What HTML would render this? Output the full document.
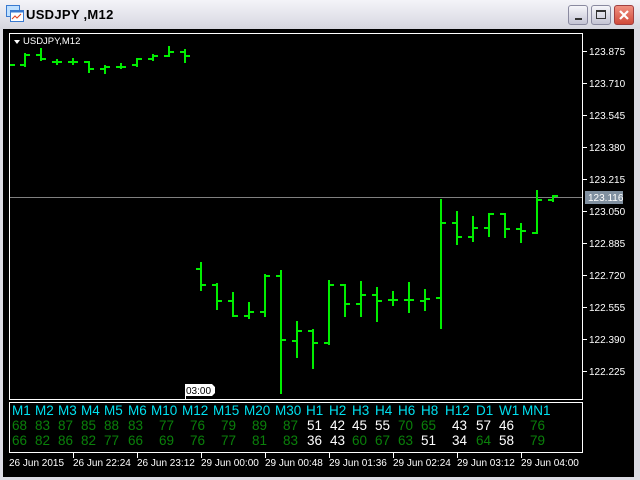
<!DOCTYPE html>
<html><head><meta charset="utf-8"><style>
html,body{margin:0;padding:0;width:640px;height:480px;overflow:hidden;background:#d4d0c8;font-family:"Liberation Sans",sans-serif}
#win{position:absolute;left:0;top:0;width:640px;height:480px;background:#dcdce4;}
#title{position:absolute;left:0;top:0;width:640px;height:29px;background:linear-gradient(#f4f4f8,#e2e2ea 60%,#d6d6de);}
#ttext{position:absolute;left:26px;top:7px;font-size:13px;font-weight:bold;color:#000;letter-spacing:0.3px}
.btn{position:absolute;top:5px;width:20px;height:20px;border-radius:3px;border:1px solid #8a8aa0;background:linear-gradient(#f6f6fa,#c4c4d4);box-sizing:border-box}
#chart{position:absolute;left:3px;top:29px;width:631px;height:448px;background:#000}
svg text{font-family:"Liberation Sans",sans-serif}
</style></head><body>
<div id="win">
<div id="title">
 <svg style="position:absolute;left:6px;top:5px" width="18" height="18" viewBox="0 0 18 18">
  <rect x="0.5" y="0.5" width="13" height="11" fill="#bfe0ff" stroke="#3a7ad0"/>
  <rect x="4.5" y="5.5" width="13" height="11" fill="#fff" stroke="#3a7ad0"/>
  <rect x="4.5" y="5.5" width="13" height="2" fill="#3a7ad0"/>
  <path d="M6 14 L9 11 L11 13 L15 9" stroke="#e04020" fill="none"/>
 </svg>
 <div id="ttext">USDJPY ,M12</div>
 <div class="btn" style="left:568px"><div style="position:absolute;left:6px;top:12px;width:7px;height:2px;background:#333"></div></div>
 <div class="btn" style="left:591px"><div style="position:absolute;left:4px;top:4px;width:10px;height:9px;border:1px solid #333;border-top-width:2px;box-sizing:border-box"></div></div>
 <div class="btn" style="left:614px;background:linear-gradient(#f09080,#d04a3a);border-color:#a04040"><svg width="18" height="18" style="position:absolute;left:0;top:0"><path d="M5 5 L13 13 M13 5 L5 13" stroke="#fff" stroke-width="2.2"/></svg></div>
</div>
<div id="chart"></div>
<svg width="640" height="480" style="position:absolute;left:0;top:0">
 <rect x="9.5" y="33.5" width="573" height="366" fill="none" stroke="#fff"/>
 <rect x="9.5" y="402.5" width="573" height="50" fill="none" stroke="#fff"/>
 <line x1="10" y1="197.5" x2="582" y2="197.5" stroke="#808080"/>
 <path d="M14 40 L20 40 L17 44 Z" fill="#fff"/>
 <text x="23" y="44" font-size="9.5" fill="#fff">USDJPY,M12</text>
 <g stroke="#fff">
  <path d="M583 51.5H587M583 83.5H587M583 115.5H587M583 147.5H587M583 179.5H587M583 211.5H587M583 243.5H587M583 275.5H587M583 307.5H587M583 339.5H587M583 371.5H587"/>
  <path d="M73.5 453V458M137.5 453V458M201.5 453V458M265.5 453V458M329.5 453V458M393.5 453V458M457.5 453V458M521.5 453V458"/>
 </g>
 <g font-size="10" fill="#fff">
  <text x="589" y="55">123.875</text><text x="589" y="87">123.710</text><text x="589" y="119">123.545</text>
  <text x="589" y="151">123.380</text><text x="589" y="183">123.215</text><text x="589" y="215">123.050</text>
  <text x="589" y="247">122.885</text><text x="589" y="279">122.720</text><text x="589" y="311">122.555</text>
  <text x="589" y="343">122.390</text><text x="589" y="375">122.225</text>
 </g>
 <rect x="585" y="191" width="38" height="13" fill="#8090a0"/>
 <text x="588" y="201" font-size="10" fill="#fff">123.116</text>
 <g font-size="10" fill="#fff">
  <text x="9" y="466">26 Jun 2015</text><text x="73" y="466">26 Jun 22:24</text><text x="137" y="466">26 Jun 23:12</text>
  <text x="201" y="466">29 Jun 00:00</text><text x="265" y="466">29 Jun 00:48</text><text x="329" y="466">29 Jun 01:36</text>
  <text x="393" y="466">29 Jun 02:24</text><text x="457" y="466">29 Jun 03:12</text><text x="521" y="466">29 Jun 04:00</text>
 </g>
 <path d="M185 384 H212 L215 387 V393 L212 396 H186 V399 H185 Z" fill="#fff"/>
 <text x="186" y="394" font-size="10" fill="#000">03:00</text>
 <g stroke="#00ee00" stroke-width="2" fill="none">
  <path d="M10 65H15"/>
  <path d="M25 53V67M20 65H25M25 55H30"/>
  <path d="M41 48V61M36 55H41M41 59H46"/>
  <path d="M57 59V65M52 62H62"/>
  <path d="M73 58V65M68 62H78"/>
  <path d="M89 61V73M84 62H89M89 69H94"/>
  <path d="M105 65V74M100 69H105M105 67H110"/>
  <path d="M121 63V69M116 67H126"/>
  <path d="M137 58V67M132 65H137M137 59H142"/>
  <path d="M153 54V61M148 59H153M153 56H158"/>
  <path d="M169 46V57M164 56H169M169 52H174"/>
  <path d="M185 49V63M180 52H185M185 56H190"/>
  <path d="M201 262V291M196 269H201M201 285H206"/>
  <path d="M217 283V310M212 285H217M217 301H222"/>
  <path d="M233 292V317M228 301H233M233 316H238"/>
  <path d="M249 302V319M244 316H249M249 312H254"/>
  <path d="M265 274V317M260 312H265M265 276H270"/>
  <path d="M281 270V394M276 276H281M281 340H286"/>
  <path d="M297 321V358M292 341H297M297 331H302"/>
  <path d="M313 329V369M308 331H313M313 343H318"/>
  <path d="M329 280V345M324 343H329M329 285H334"/>
  <path d="M345 284V317M340 285H345M345 304H350"/>
  <path d="M361 281V317M356 304H361M361 295H366"/>
  <path d="M377 287V322M372 295H377M377 301H382"/>
  <path d="M393 291V306M388 300H398"/>
  <path d="M409 282V313M404 300H414"/>
  <path d="M425 289V311M420 301H425M425 299H430"/>
  <path d="M441 199V329M436 298H441M441 223H446"/>
  <path d="M457 211V245M452 223H457M457 237H462"/>
  <path d="M473 216V242M468 237H473M473 228H478"/>
  <path d="M489 213V237M484 228H489M489 214H494"/>
  <path d="M505 213V238M500 214H505M505 229H510"/>
  <path d="M521 223V243M516 229H521M521 231H526"/>
  <path d="M537 190V234M532 233H537M537 200H542"/>
  <path d="M553 195V202M548 200H553M553 196H558"/>
 </g>
 <g font-size="13.5">
  <g fill="#00e0f0">
   <text x="12" y="415">M1</text><text x="35" y="415">M2</text><text x="58" y="415">M3</text><text x="81" y="415">M4</text>
   <text x="104" y="415">M5</text><text x="128" y="415">M6</text><text x="151" y="415">M10</text><text x="182" y="415">M12</text>
   <text x="213" y="415">M15</text><text x="244" y="415">M20</text><text x="275" y="415">M30</text><text x="306" y="415">H1</text>
   <text x="329" y="415">H2</text><text x="352" y="415">H3</text><text x="375" y="415">H4</text><text x="398" y="415">H6</text>
   <text x="421" y="415">H8</text><text x="445" y="415">H12</text><text x="476" y="415">D1</text><text x="499" y="415">W1</text>
   <text x="522" y="415">MN1</text>
  </g>
  <g fill="#0a800a">
   <text x="12" y="430">68</text><text x="35" y="430">83</text><text x="58" y="430">87</text><text x="81" y="430">85</text>
   <text x="104" y="430">88</text><text x="128" y="430">83</text><text x="159" y="430">77</text><text x="190" y="430">76</text>
   <text x="221" y="430">79</text><text x="252" y="430">89</text><text x="283" y="430">87</text>
   <text x="398" y="430">70</text><text x="421" y="430">65</text><text x="530" y="430">76</text>
   <text x="12" y="445">66</text><text x="35" y="445">82</text><text x="58" y="445">86</text><text x="81" y="445">82</text>
   <text x="104" y="445">77</text><text x="128" y="445">66</text><text x="159" y="445">69</text><text x="190" y="445">76</text>
   <text x="221" y="445">77</text><text x="252" y="445">81</text><text x="283" y="445">83</text>
   <text x="352" y="445">60</text><text x="375" y="445">67</text><text x="398" y="445">63</text>
   <text x="476" y="445">64</text><text x="530" y="445">79</text>
  </g>
  <g fill="#fff">
   <text x="307" y="430">51</text><text x="330" y="430">42</text><text x="352" y="430">45</text><text x="375" y="430">55</text>
   <text x="452" y="430">43</text><text x="476" y="430">57</text><text x="499" y="430">46</text>
   <text x="307" y="445">36</text><text x="330" y="445">43</text><text x="421" y="445">51</text>
   <text x="452" y="445">34</text><text x="499" y="445">58</text>
  </g>
 </g>
</svg>
</div>
</body></html>
